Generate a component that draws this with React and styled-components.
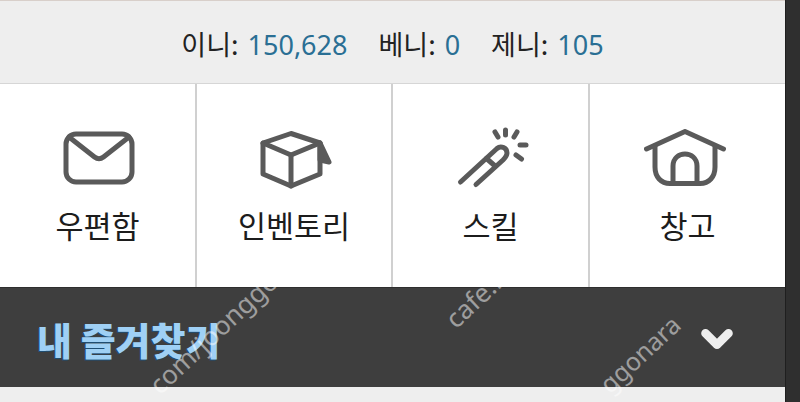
import React from 'react';
import styled, { createGlobalStyle } from 'styled-components';
import { ChevronDown } from 'lucide-react';

const GlobalStyle = createGlobalStyle`
    html, body {
        margin: 0;
        padding: 0;
        background: #2f2f2f;
    }
    body {
        font-family: "Noto Sans CJK KR", "Noto Sans", sans-serif;
    }
`;

const Page = styled.div`
    position: relative;
    width: 800px;
    height: 402px;
    overflow: hidden;
    display: flex;
    background: #2f2f2f;
`;

const Panel = styled.div`
    width: 785px;
    display: flex;
    flex-direction: column;
    background: #eeeeee;
    box-shadow: 1px 0 0 #1f1f1f;
`;

const CurrencyBar = styled.div`
    height: 84px;
    box-sizing: border-box;
    padding: 3px 0 0 0;
    display: flex;
    align-items: center;
    justify-content: center;
    gap: 31px;
    background: #eeeeee;
    border-top: 1px solid #d8cfca;
    border-bottom: 1px solid #d6d6d6;
    font-size: 27px;
    line-height: 1;
    color: #222;
`;

const Currency = styled.span`
    white-space: nowrap;
`;

const Amount = styled.span`
    margin-left: 9px;
    color: #2a6f94;
    font-family: "Noto Sans", sans-serif;
`;

const Menu = styled.div`
    height: 203px;
    display: grid;
    grid-template-columns: 197px 196px 197px 195px;
    background: #fff;
`;

const MenuItem = styled.div`
    display: flex;
    flex-direction: column;
    align-items: center;
    box-sizing: border-box;
    padding-top: 41px;
    border-right: ${p => (p.$last ? 'none' : '2px solid #d0d0d0')};
`;

const IconSlot = styled.div`
    height: 66px;
    display: flex;
    align-items: center;
    justify-content: center;
`;

const MenuLabel = styled.div`
    margin-top: 14px;
    font-size: 30.5px;
    line-height: 40px;
    color: #1c1c1c;
`;

const Favorites = styled.div`
    height: 100px;
    box-sizing: border-box;
    padding: 2px 45px 0 37px;
    display: flex;
    align-items: center;
    justify-content: space-between;
    background: #3e3e3e;
    border-top: 1px solid #2e2e2e;
`;

const FavoritesTitle = styled.div`
    font-size: 38px;
    font-weight: 900;
    line-height: 1;
    color: #9fd0f5;
    text-shadow: -1px 1px 0 #1f4d72;
`;

const Footer = styled.div`
    flex: 1;
    background: #eeeeee;
`;

const Watermark = styled.span`
    position: absolute;
    left: ${p => p.$x}px;
    top: ${p => p.$y}px;
    transform: rotate(-43deg);
    transform-origin: left bottom;
    font-family: "Noto Sans", sans-serif;
    font-size: ${p => p.$size || 26}px;
    line-height: 1;
    white-space: nowrap;
    color: rgba(255, 255, 255, 0.5);
    pointer-events: none;
`;

const Icon = ({ width, height, viewBox, children }) => (
    <svg
        width={width}
        height={height}
        viewBox={viewBox}
        fill="none"
        stroke="#5a5a5a"
        strokeWidth="5"
        strokeLinecap="round"
        strokeLinejoin="round"
    >
        {children}
    </svg>
);

const MailIcon = () => (
    <Icon width={74} height={54} viewBox="-2 0 74 54">
        <rect x="3" y="3" width="66" height="48" rx="10" />
        <path d="M6 6 L31.500 26 Q36 29.500 40.500 26 L66 6" />
    </Icon>
);

const BoxIcon = () => (
    <Icon width={76} height={62} viewBox="-4 -4 76 62">
        <path d="M31 2.500 L3 12 V43 L31 55 L60 43 V12 Z" />
        <path d="M3 12 L31 24 L60 12" />
        <path d="M31 24 V55" />
        <path d="M60 12 L69 31 L60 29 Z" fill="#5a5a5a" />
    </Icon>
);

const WandIcon = () => (
    <Icon width={78} height={62} viewBox="-6 0 78 62">
        <path d="M2.500 55 L39 21.500 C43 18 49 21 49 26 C49 29 47 31 45 33 L18 57.500" />
        <path d="M28.500 31.500 L36.500 38.500" />
        <path d="M37 5 L40 10" />
        <path d="M47.500 3 V8" />
        <path d="M59 5 L56 10" />
        <path d="M62 18 H68" />
        <path d="M58 28 L63.500 32" />
    </Icon>
);

const HouseIcon = () => (
    <Icon width={88} height={58} viewBox="0 0 88 58">
        <path d="M2.500 20 L41 2.500 L79.500 20" />
        <path d="M11 17 V38 C11 48 17 54.500 26 54.500 H56 C65 54.500 71 48 71 38 V17" />
        <path d="M29 54 V37 C29 21 53 21 53 37 V54" />
    </Icon>
);

const MENU_ITEMS = [
    { label: '우편함', icon: <MailIcon /> },
    { label: '인벤토리', icon: <BoxIcon /> },
    { label: '스킬', icon: <WandIcon /> },
    { label: '창고', icon: <HouseIcon /> },
];

const CURRENCIES = [
    { label: '이니:', amount: '150,628' },
    { label: '베니:', amount: '0' },
    { label: '제니:', amount: '105' },
];

const App = () => (
    <Page>
        <GlobalStyle />
        <Panel>
            <CurrencyBar>
                {CURRENCIES.map(item => (
                    <Currency key={item.label}>
                        {item.label}
                        <Amount>{item.amount}</Amount>
                    </Currency>
                ))}
            </CurrencyBar>
            <Menu>
                {MENU_ITEMS.map((item, i) => (
                    <MenuItem key={item.label} $last={i === MENU_ITEMS.length - 1}>
                        <IconSlot>{item.icon}</IconSlot>
                        <MenuLabel>{item.label}</MenuLabel>
                    </MenuItem>
                ))}
            </Menu>
            <Favorites>
                <FavoritesTitle>내 즐겨찾기</FavoritesTitle>
                <ChevronDown size={46} color="#eeeeee" strokeWidth={4.5} />
            </Favorites>
            <Footer />
        </Panel>
        <Watermark $x={162} $y={372}>com/joonggona</Watermark>
        <Watermark $x={458} $y={306}>cafe.n</Watermark>
        <Watermark $x={612} $y={372} $size={25}>ggonara</Watermark>
    </Page>
);

export default App;
